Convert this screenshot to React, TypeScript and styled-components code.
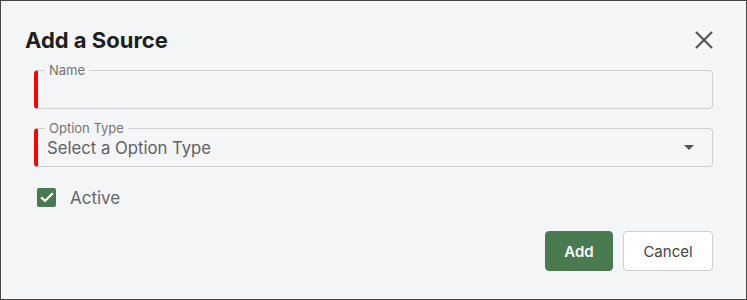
import styled, { createGlobalStyle } from "styled-components";
import { useState } from "react";

const GlobalStyle = createGlobalStyle`
  * { box-sizing: border-box; }
  html, body { margin: 0; padding: 0; }
  body {
    font-family: Inter, "Noto Sans", "Liberation Sans", sans-serif;
    background: #f4f5f7;
  }
`;

const Dialog = styled.div`
  width: 747px;
  height: 300px;
  border: 1px solid #454545;
  background: #f4f5f7;
  padding: 21px 33px 0 33px;
  display: flex;
  flex-direction: column;
`;

const Header = styled.div`
  display: flex;
  justify-content: space-between;
  align-items: center;
  height: 36px;
  margin-left: -9px;
  margin-bottom: 12px;
`;

const Title = styled.h2`
  margin: 0;
  font-size: 22px;
  font-weight: 700;
  color: #1f1f1f;
`;

const CloseButton = styled.button`
  border: none;
  background: none;
  padding: 0;
  width: 22px;
  height: 22px;
  margin-right: -2px;
  display: flex;
  align-items: center;
  justify-content: center;
  cursor: pointer;
`;

const Field = styled.div`
  position: relative;
  height: 39px;
  padding: 0 12px 0 9px;
  border: 1px solid #cfcfd1;
  border-left: 4px solid #ff0000;
  border-radius: 4px;
  display: flex;
  align-items: center;
  & + & {
    margin-top: 19px;
  }
`;

const Legend = styled.span`
  position: absolute;
  top: -8px;
  left: 7px;
  padding: 0 4px;
  background: #f4f5f7;
  font-size: 13px;
  line-height: 14px;
  color: #747474;
`;

const Placeholder = styled.span`
  flex: 1;
  font-size: 16.7px;
  color: #626262;
  margin-top: 1px;
`;

const Caret = styled.span`
  width: 0;
  height: 0;
  border-left: 5px solid transparent;
  border-right: 5px solid transparent;
  border-top: 5px solid #555;
  margin-right: 6px;
`;

const CheckRow = styled.label`
  display: flex;
  align-items: center;
  gap: 14px;
  margin-top: 21px;
  margin-left: 3px;
  height: 19px;
  font-size: 17px;
  color: #666;
  cursor: pointer;
`;

const Box = styled.span<{ $checked: boolean }>`
  width: 19px;
  height: 19px;
  border-radius: 2px;
  background: ${(p) => (p.$checked ? "#497a4f" : "#fff")};
  border: ${(p) => (p.$checked ? "none" : "1px solid #999")};
  display: flex;
  align-items: center;
  justify-content: center;
`;

const Footer = styled.div`
  display: flex;
  justify-content: flex-end;
  gap: 10px;
  margin-top: 24px;
`;

const Button = styled.button<{ $primary?: boolean; $width: number }>`
  height: 40px;
  width: ${(p) => p.$width}px;
  padding: 0;
  border-radius: 4px;
  font-family: inherit;
  font-size: 15px;
  font-weight: ${(p) => (p.$primary ? 600 : 400)};
  color: ${(p) => (p.$primary ? "#fff" : "#444")};
  background: ${(p) => (p.$primary ? "#4a7a4f" : "#fff")};
  border: 1px solid ${(p) => (p.$primary ? "#4a7a4f" : "#cfcfd1")};
  cursor: pointer;
`;

export default function App() {
  const [active, setActive] = useState(true);
  return (
    <>
      <GlobalStyle />
      <Dialog>
        <Header>
          <Title>Add a Source</Title>
          <CloseButton aria-label="Close">
            <svg width="18" height="18" viewBox="0 0 18 18">
              <path d="M1 1L17 17M17 1L1 17" stroke="#555" strokeWidth="2.2" />
            </svg>
          </CloseButton>
        </Header>
        <Field>
          <Legend>Name</Legend>
        </Field>
        <Field>
          <Legend>Option Type</Legend>
          <Placeholder>Select a Option Type</Placeholder>
          <Caret />
        </Field>
        <CheckRow onClick={() => setActive(!active)}>
          <Box $checked={active}>
            {active && (
              <svg width="14" height="11" viewBox="0 0 14 11">
                <path d="M1.2 5.3L5 9L12.8 1.3" stroke="#fff" strokeWidth="2.3" fill="none" />
              </svg>
            )}
          </Box>
          Active
        </CheckRow>
        <Footer>
          <Button $primary $width={68}>Add</Button>
          <Button $width={90}>Cancel</Button>
        </Footer>
      </Dialog>
    </>
  );
}
